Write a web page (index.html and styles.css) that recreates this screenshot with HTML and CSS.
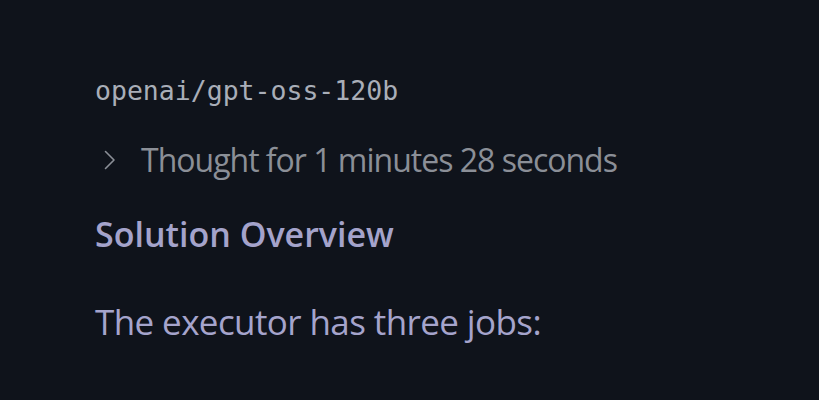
FILE: index.html
```html
<!DOCTYPE html>
<html>
<head>
<meta charset="utf-8">
<link rel="stylesheet" href="styles.css">
</head>
<body>
<main class="msg">
  <div class="model">openai/gpt-oss-120b</div>
  <div class="thought">
    <svg class="chev" width="12" height="20" viewBox="0 0 12 20"><path d="M1.5 1.5 L10 10 L1.5 18.5" fill="none" stroke="#8b8f97" stroke-width="1.6" stroke-linecap="round" stroke-linejoin="round"/></svg>
    <span>Thought for 1 minutes 28 seconds</span>
  </div>
  <h2 class="heading">Solution Overview</h2>
  <p class="body">The executor has three jobs:</p>
</main>
</body>
</html>
```

FILE: styles.css
```css
html, body {
  margin: 0;
  padding: 0;
  background: #0f131b;
  height: 100%;
  overflow: hidden;
}
.msg {
  padding: 76px 0 0 95px;
  display: flex;
  flex-direction: column;
  align-items: flex-start;
}
.model {
  font-family: "DejaVu Sans Mono", monospace;
  font-size: 26.5px;
  color: #a9aeb8;
  line-height: 30px;
}
.thought {
  margin-top: 34px;
  display: flex;
  align-items: center;
  gap: 25px;
  font-family: "Open Sans", sans-serif;
  font-size: 32px;
  letter-spacing: -1px;
  color: #8b8f97;
  line-height: 40px;
}
.chev { margin-left: 9px; }
.heading {
  margin: 32px 0 0 0;
  font-family: "Open Sans", sans-serif;
  font-weight: 600;
  font-size: 34px;
  line-height: 44px;
  color: #a4a3cb;
}
.body {
  margin: 44px 0 0 0;
  font-family: "Open Sans", sans-serif;
  font-size: 35px;
  letter-spacing: -0.6px;
  line-height: 44px;
  color: #a5a4cc;
}
```
